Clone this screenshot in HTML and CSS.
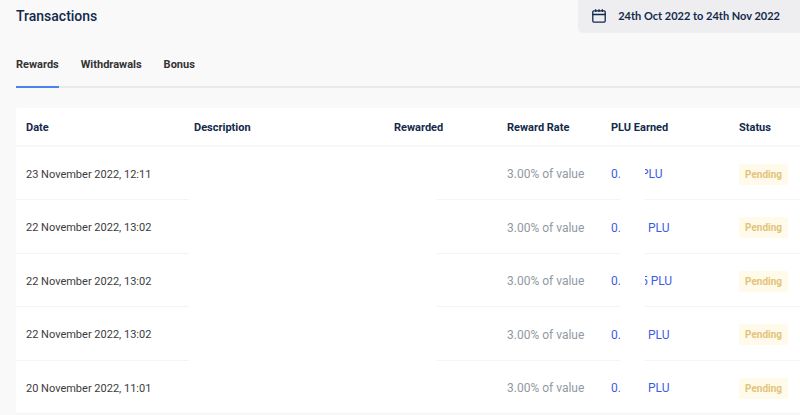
FILE: index.html
```html
<!DOCTYPE html>
<html lang="en">

<head>
    <meta charset="utf-8">
    <title>Transactions</title>
    <link rel="stylesheet" href="styles.css">
</head>

<body>
    <header class="header">
        <h1>Transactions</h1>
        <button class="date-range" type="button">
            <svg width="14" height="14" viewBox="0 0 14 14" fill="none" stroke="#13294b" stroke-width="1.3" stroke-linecap="round">
                <rect x="0.8" y="1.9" width="12.4" height="11.2" rx="1" />
                <path d="M0.8 5.5H13.2M3.7 0.7V2.4M7 0.7V2.4M10.3 0.7V2.4" />
            </svg>
            <span>24th Oct 2022 to 24th Nov 2022</span>
        </button>
    </header>

    <nav class="tabs">
        <a class="tab active" href="#rewards">Rewards</a>
        <a class="tab" href="#withdrawals">Withdrawals</a>
        <a class="tab" href="#bonus">Bonus</a>
    </nav>

    <main class="card">
        <table>
            <thead>
                <tr>
                    <th class="col-date">Date</th>
                    <th class="col-description">Description</th>
                    <th class="col-rewarded">Rewarded</th>
                    <th class="col-rate">Reward Rate</th>
                    <th class="col-plu">PLU Earned</th>
                    <th class="col-status">Status</th>
                </tr>
            </thead>
            <tbody>
                <tr>
                    <td>23 November 2022, 12:11</td>
                    <td><span class="mask mask-details"></span></td>
                    <td></td>
                    <td class="rate">3.00% of value</td>
                    <td class="plu">0.<span class="digits digits-short"></span>PLU<span class="mask mask-digits"></span></td>
                    <td><span class="badge">Pending</span></td>
                </tr>
                <tr>
                    <td>22 November 2022, 13:02</td>
                    <td><span class="mask mask-details"></span></td>
                    <td></td>
                    <td class="rate">3.00% of value</td>
                    <td class="plu">0.<span class="digits"></span>PLU<span class="mask mask-digits"></span></td>
                    <td><span class="badge">Pending</span></td>
                </tr>
                <tr>
                    <td>22 November 2022, 13:02</td>
                    <td><span class="mask mask-details"></span></td>
                    <td></td>
                    <td class="rate">3.00% of value</td>
                    <td class="plu">0.<span class="digits digits-short"></span>5 PLU<span class="mask mask-digits"></span></td>
                    <td><span class="badge">Pending</span></td>
                </tr>
                <tr>
                    <td>22 November 2022, 13:02</td>
                    <td><span class="mask mask-details"></span></td>
                    <td></td>
                    <td class="rate">3.00% of value</td>
                    <td class="plu">0.<span class="digits"></span>PLU<span class="mask mask-digits"></span></td>
                    <td><span class="badge">Pending</span></td>
                </tr>
                <tr>
                    <td>20 November 2022, 11:01</td>
                    <td><span class="mask mask-details"></span></td>
                    <td></td>
                    <td class="rate">3.00% of value</td>
                    <td class="plu">0.<span class="digits"></span>PLU<span class="mask mask-digits"></span></td>
                    <td><span class="badge">Pending</span></td>
                </tr>
            </tbody>
        </table>
    </main>
</body>

</html>
```
FILE: styles.css
```css
* {
    box-sizing: border-box;
}

body {
    margin: 0;
    padding-left: 16px;
    background-color: #f9f9f9;
    color: #3c3c3c;
    font-family: Roboto, sans-serif;
    font-size: 11px;
}

.header {
    display: flex;
    justify-content: space-between;
    align-items: flex-start;
}

h1 {
    margin: 0;
    color: #13294b;
    font-size: 14px;
    font-weight: 500;
    line-height: 32px;
}

.date-range {
    display: flex;
    align-items: center;
    gap: 12px;
    height: 33px;
    padding: 0 20px 2px 14px;
    border: none;
    border-radius: 0 0 0 5px;
    background-color: #eeeef1;
    color: #13294b;
    font-family: Lato, sans-serif;
    font-size: 11px;
    font-weight: 700;
    cursor: pointer;
}

.tabs {
    display: flex;
    gap: 22px;
    margin-top: 15px;
    border-bottom: 2px solid #e9e9e9;
}

.tab {
    height: 40px;
    margin-bottom: -2px;
    border-bottom: 2px solid transparent;
    color: #333;
    font-size: 11px;
    font-weight: 700;
    line-height: 33px;
    text-decoration: none;
}

.tab.active {
    border-color: #4a84ee;
}

.card {
    margin-top: 20px;
    border-radius: 3px 0 0 0;
    background-color: #fff;
}

table {
    width: 100%;
    table-layout: fixed;
    border-collapse: separate;
    border-spacing: 0;
}

th,
td {
    padding: 2px 0 0 10px;
    text-align: left;
    white-space: nowrap;
}

th {
    height: 39px;
    border-bottom: 2px solid #f8f8f8;
    color: #13294b;
    font-weight: 700;
}

td {
    position: relative;
    height: 53px;
    border-bottom: 1px solid #f4f4f4;
}

tr:nth-child(even) td {
    height: 54px;
}

.col-date {
    width: 168px;
}

.col-description {
    width: 200px;
}

.col-rewarded {
    width: 113px;
}

.col-rate {
    width: 104px;
}

.col-plu {
    width: 128px;
}

.rate {
    color: #9199a3;
    font-size: 12px;
}

.plu {
    color: #3d5ce5;
    font-size: 12px;
}

.digits {
    display: inline-block;
    width: 27px;
}

.digits-short {
    width: 20px;
}

.mask {
    position: absolute;
    top: 0;
    bottom: -1px;
    z-index: 1;
    background-color: #fff;
}

tr:last-child .mask {
    bottom: 0;
}

.mask-details {
    left: 5px;
    width: 248px;
}

.mask-digits {
    left: 19px;
    width: 25px;
}

.badge {
    display: inline-block;
    padding: 0 6px;
    border-radius: 2px;
    background-color: #fffaea;
    color: #e2c47b;
    font-size: 10px;
    font-weight: 700;
    line-height: 21px;
}
```
